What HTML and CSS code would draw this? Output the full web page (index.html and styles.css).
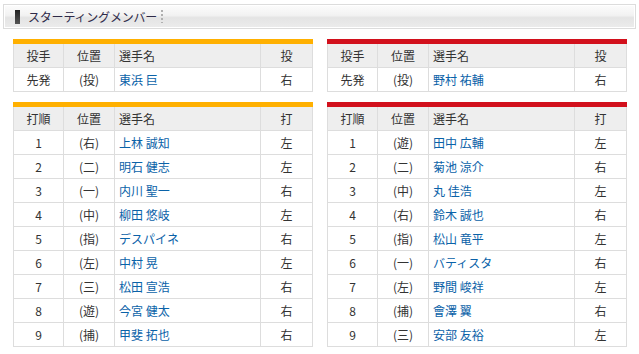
FILE: index.html
```html
<!DOCTYPE html>
<html lang="ja">
<head>
<meta charset="utf-8">
<title>スターティングメンバー</title>
<link rel="stylesheet" href="styles.css">
</head>
<body>
<div class="title-bar">
  <span class="title-mark"></span>
  <h2 class="title-text">スターティングメンバー</h2>
  <span class="title-sep"></span>
</div>
<div class="teams">
  <div class="team team-home">
    <div class="bar"></div>
    <table class="lineup">
      <tr><th>投手</th><th>位置</th><th class="name">選手名</th><th>投</th></tr>
      <tr><td>先発</td><td>(投)</td><td class="name"><a>東浜 巨</a></td><td>右</td></tr>
    </table>
    <div class="bar bar-gap"></div>
    <table class="lineup">
      <tr><th>打順</th><th>位置</th><th class="name">選手名</th><th>打</th></tr>
      <tr><td>1</td><td>(右)</td><td class="name"><a>上林 誠知</a></td><td>左</td></tr>
      <tr><td>2</td><td>(二)</td><td class="name"><a>明石 健志</a></td><td>左</td></tr>
      <tr><td>3</td><td>(一)</td><td class="name"><a>内川 聖一</a></td><td>右</td></tr>
      <tr><td>4</td><td>(中)</td><td class="name"><a>柳田 悠岐</a></td><td>左</td></tr>
      <tr><td>5</td><td>(指)</td><td class="name"><a>デスパイネ</a></td><td>右</td></tr>
      <tr><td>6</td><td>(左)</td><td class="name"><a>中村 晃</a></td><td>左</td></tr>
      <tr><td>7</td><td>(三)</td><td class="name"><a>松田 宣浩</a></td><td>右</td></tr>
      <tr><td>8</td><td>(遊)</td><td class="name"><a>今宮 健太</a></td><td>右</td></tr>
      <tr><td>9</td><td>(捕)</td><td class="name"><a>甲斐 拓也</a></td><td>右</td></tr>
    </table>
  </div>
  <div class="team team-away">
    <div class="bar"></div>
    <table class="lineup">
      <tr><th>投手</th><th>位置</th><th class="name">選手名</th><th>投</th></tr>
      <tr><td>先発</td><td>(投)</td><td class="name"><a>野村 祐輔</a></td><td>右</td></tr>
    </table>
    <div class="bar bar-gap"></div>
    <table class="lineup">
      <tr><th>打順</th><th>位置</th><th class="name">選手名</th><th>打</th></tr>
      <tr><td>1</td><td>(遊)</td><td class="name"><a>田中 広輔</a></td><td>左</td></tr>
      <tr><td>2</td><td>(二)</td><td class="name"><a>菊池 涼介</a></td><td>右</td></tr>
      <tr><td>3</td><td>(中)</td><td class="name"><a>丸 佳浩</a></td><td>左</td></tr>
      <tr><td>4</td><td>(右)</td><td class="name"><a>鈴木 誠也</a></td><td>右</td></tr>
      <tr><td>5</td><td>(指)</td><td class="name"><a>松山 竜平</a></td><td>左</td></tr>
      <tr><td>6</td><td>(一)</td><td class="name"><a>バティスタ</a></td><td>右</td></tr>
      <tr><td>7</td><td>(左)</td><td class="name"><a>野間 峻祥</a></td><td>左</td></tr>
      <tr><td>8</td><td>(捕)</td><td class="name"><a>會澤 翼</a></td><td>右</td></tr>
      <tr><td>9</td><td>(三)</td><td class="name"><a>安部 友裕</a></td><td>左</td></tr>
    </table>
  </div>
</div>
</body>
</html>
```
FILE: styles.css
```css
html, body {
  margin: 0;
  padding: 0;
  background: #ffffff;
}
body {
  font-family: "Noto Sans CJK JP", "Noto Sans", sans-serif;
  font-size: 12px;
  color: #333333;
}
.title-bar {
  margin: 4px 3px 0 3px;
  height: 23px;
  border: 1px solid #dcdcdc;
  box-shadow: inset 0 0 0 1px #ffffff;
  background: linear-gradient(#fcfcfc 0%, #f2f2f2 45%, #e4e4e4 55%, #ececec 100%);
  display: flex;
  align-items: center;
  padding-left: 11px;
}
.title-mark {
  width: 5px;
  height: 14px;
  background: linear-gradient(#222222, #555555);
  margin-right: 8px;
}
.title-text {
  margin: 0;
  font-size: 12px;
  font-weight: normal;
  letter-spacing: -0.2px;
  color: #2e2a48;
  line-height: 14px;
}
.title-sep {
  width: 2px;
  height: 13px;
  margin-left: 4px;
  background: repeating-linear-gradient(#b0b0b0 0 2px, transparent 2px 4px);
}
.teams {
  display: grid;
  grid-template-columns: 300px 300px;
  column-gap: 14px;
  padding-left: 13px;
  margin-top: 10px;
}
.bar {
  height: 5px;
}
.team-home .bar { background: #ffb000; }
.team-away .bar { background: #d2101c; }
.bar-gap { margin-top: 10px; }
.lineup {
  width: 300px;
  border-collapse: collapse;
  table-layout: fixed;
}
.lineup th, .lineup td {
  height: 23px;
  padding: 0;
  border: 1px solid #dddddd;
  border-top: none;
  text-align: center;
  font-weight: normal;
  line-height: 23px;
}
.lineup th {
  background: #eeeeee;
}
.lineup tr + tr td {
  border-top: 1px solid #dddddd;
}
.lineup th:nth-child(1), .lineup td:nth-child(1) { width: 49px; }
.lineup th:nth-child(2), .lineup td:nth-child(2) { width: 50px; }
.lineup th:nth-child(4), .lineup td:nth-child(4) { width: 51px; }
.lineup .name {
  text-align: left;
  padding-left: 4px;
}
.lineup a {
  color: #0a62a8;
  text-decoration: none;
}
```
